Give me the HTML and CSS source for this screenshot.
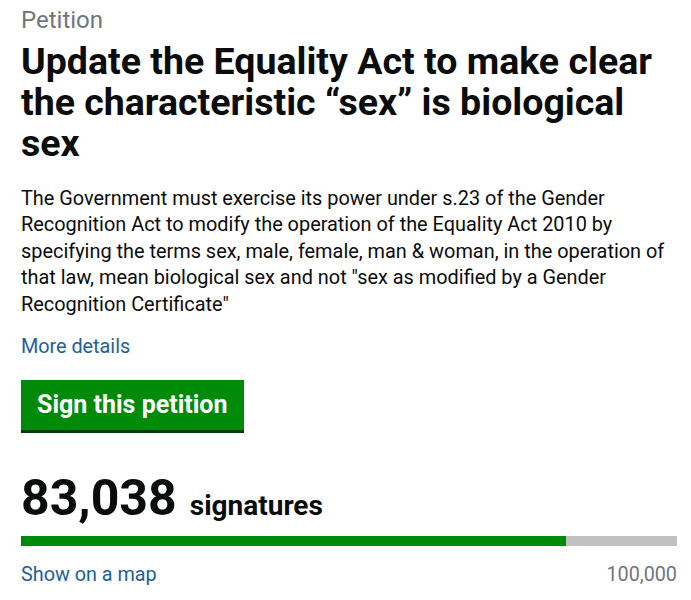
FILE: index.html
```html
<!DOCTYPE html>
<html lang="en">
<head>
<meta charset="utf-8">
<title>Petition</title>
<link rel="stylesheet" href="styles.css">
</head>
<body>
<main class="page">
  <div class="kicker">Petition</div>
  <h1 class="title">Update the Equality Act to make clear the characteristic “sex” is biological sex</h1>
  <p class="summary">The Government must exercise its power under s.23 of the Gender Recognition Act to modify the operation of the Equality Act 2010 by specifying the terms sex, male, female, man &amp; woman, in the operation of that law, mean biological sex and not "sex as modified by a Gender Recognition Certificate"</p>
  <a class="link more" href="#">More details</a>
  <a class="button" href="#">Sign this petition</a>
  <div class="count"><span class="number">83,038</span><span class="label">signatures</span></div>
  <div class="bar"><div class="fill" style="width:83.038%"></div></div>
  <div class="foot">
    <a class="link" href="#">Show on a map</a>
    <span class="target">100,000</span>
  </div>
</main>
</body>
</html>
```

FILE: styles.css
```css
html, body {
  margin: 0;
  padding: 0;
  background: #ffffff;
}
body {
  font-family: Roboto, "Liberation Sans", sans-serif;
  color: #0b0c0c;
}
.page {
  padding: 4px 14px 0 21px;
  display: flex;
  flex-direction: column;
  align-items: flex-start;
}
.kicker {
  font-size: 24px;
  line-height: 32px;
  color: #6f777b;
}
.title {
  margin: 5px 0 0 0;
  font-size: 37.5px;
  line-height: 41px;
  font-weight: 700;
}
.summary {
  margin: 22px 0 0 0;
  font-size: 19.9px;
  line-height: 26.4px;
}
.link {
  color: #1d6196;
  text-decoration: none;
  font-size: 19.8px;
  line-height: 26px;
}
.more {
  margin-top: 16px;
}
.button {
  margin-top: 20px;
  display: block;
  background: #008a0a;
  color: #ffffff;
  text-decoration: none;
  font-weight: 700;
  font-size: 25px;
  line-height: 50px;
  padding: 0 16px;
  box-shadow: 0 3px 0 #003b00;
}
.count {
  margin-top: 39px;
  display: flex;
  align-items: baseline;
  gap: 13px;
}
.number {
  font-size: 50px;
  line-height: 58px;
  font-weight: 700;
}
.label {
  font-size: 28px;
  font-weight: 700;
}
.bar {
  align-self: stretch;
  margin-top: 9px;
  height: 10px;
  background: #bfc1c3;
}
.fill {
  height: 100%;
  background: #008a0a;
}
.foot {
  align-self: stretch;
  margin-top: 16px;
  display: flex;
  justify-content: space-between;
  align-items: baseline;
}
.target {
  font-size: 19.8px;
  color: #6f777b;
}
```
